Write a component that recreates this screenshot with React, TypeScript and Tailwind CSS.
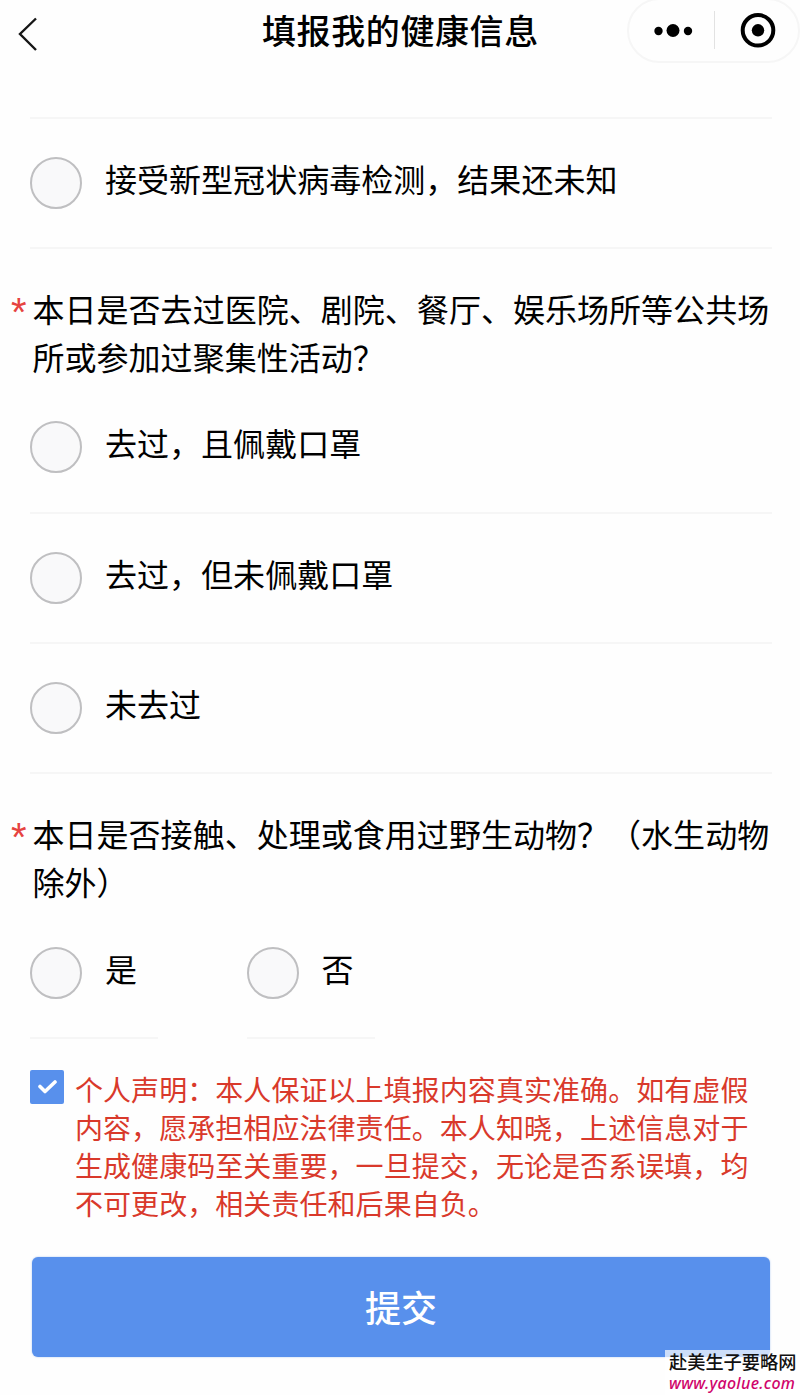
import { useState } from "react";

type RadioOptionProps = {
  label: string;
  checked: boolean;
  onSelect: () => void;
  className?: string;
};

const RadioOption = ({ label, checked, onSelect, className = "" }: RadioOptionProps) => (
  <label
    className={`flex h-[130.2px] items-center border-b-2 border-[#f6f6f6] ${className}`}
  >
    <input type="radio" className="sr-only" checked={checked} onChange={onSelect} />
    <span
      className={`-mt-px h-[52px] w-[52px] shrink-0 rounded-full border-2 border-[#bfbfc1] ${
        checked ? "bg-[#5890ec]" : "bg-[#f9f9fa]"
      }`}
    />
    <span className="-mt-[11px] ml-[23px] whitespace-nowrap">{label}</span>
  </label>
);

// question title, one entry per line
const QuestionTitle = ({ lines }: { lines: string[] }) => (
  <div className="flex pt-[35px] pb-[3.6px] leading-[48px]">
    <span className="-ml-[19px] w-[21.5px] shrink-0 pt-[4px] font-['Liberation_Sans',sans-serif] text-[40px] text-[#e64340]">
      *
    </span>
    <div>
      {lines.map((line) => (
        <p key={line} className="whitespace-nowrap">
          {line}
        </p>
      ))}
    </div>
  </div>
);

const placeOptions = ["去过，且佩戴口罩", "去过，但未佩戴口罩", "未去过"];

const statement = [
  "个人声明：本人保证以上填报内容真实准确。如有虚假",
  "内容，愿承担相应法律责任。本人知晓，上述信息对于",
  "生成健康码至关重要，一旦提交，无论是否系误填，均",
  "不可更改，相关责任和后果自负。",
];

const Header = () => (
  <header className="flex h-[117px] items-start">
    <button type="button" className="mt-[16px] ml-[16px] h-9 w-6" aria-label="返回">
      <svg width="24" height="36" viewBox="0 0 24 36" fill="none" stroke="#161616" strokeWidth="2.4">
        <path d="M20 2.5 4 18l16 16" />
      </svg>
    </button>
    <h1 className="mt-[6px] ml-[222px] w-[276px] text-[34px] leading-[48px] font-medium tracking-[0.6px] whitespace-nowrap">
      填报我的健康信息
    </h1>
    <div className="-mt-[2px] ml-[89px] flex h-[65px] w-[173px] shrink-0 items-center rounded-full border-2 border-[#f6f6f6]">
      <svg width="169" height="61" viewBox="0 0 169 61">
        <circle cx="29.5" cy="31" r="4.2" />
        <circle cx="44" cy="30.5" r="6.5" />
        <circle cx="59" cy="31" r="4.2" />
        <path d="M85.5 11v38" stroke="#e2e2e2" />
        <circle cx="129" cy="30.3" r="15.3" fill="none" stroke="#000" strokeWidth="4" />
        <circle cx="129" cy="30.3" r="6.2" />
      </svg>
    </div>
  </header>
);

const App = () => {
  const [test, setTest] = useState("");
  const [place, setPlace] = useState("");
  const [animal, setAnimal] = useState("");
  const [agreed, setAgreed] = useState(true);

  return (
    <div className="relative h-[1395px] w-[800px] overflow-hidden bg-[#fefefe] font-['Noto_Sans_CJK_SC',sans-serif] text-black">
      <Header />

      <form onSubmit={(e) => e.preventDefault()}>
        <div className="ml-[30px] w-[742px] text-[32px] tracking-[0.03px]">
          <div className="h-[2px] bg-[#f6f6f6]" />
          <RadioOption
            label="接受新型冠状病毒检测，结果还未知"
            checked={test === "unknown"}
            onSelect={() => setTest("unknown")}
          />

          <QuestionTitle
            lines={["本日是否去过医院、剧院、餐厅、娱乐场所等公共场", "所或参加过聚集性活动？"]}
          />
          {placeOptions.map((o) => (
            <RadioOption key={o} label={o} checked={place === o} onSelect={() => setPlace(o)} />
          ))}

          <QuestionTitle
            lines={["本日是否接触、处理或食用过野生动物？（水生动物", "除外）"]}
          />
          <div className="flex gap-[88.5px]">
            {["是", "否"].map((o) => (
              <RadioOption
                key={o}
                label={o}
                checked={animal === o}
                onSelect={() => setAnimal(o)}
                className="w-[128px]"
              />
            ))}
          </div>
        </div>

        {/* 个人声明 */}
        <label className="mt-[30.4px] ml-[30px] flex text-[28px] leading-[38.2px] tracking-[0.06px] text-[#d9392b]">
          <input
            type="checkbox"
            className="sr-only"
            checked={agreed}
            onChange={() => setAgreed(!agreed)}
          />
          <span className="flex h-[34px] w-[34px] shrink-0 items-center justify-center rounded-[2px] bg-[#5890ec]">
            {agreed && (
              <svg width="20" height="16" viewBox="0 0 20 16" fill="none" stroke="#fff" strokeWidth="3.6">
                <path d="m3 7.5 5 5L18 3" strokeLinecap="round" strokeLinejoin="round" />
              </svg>
            )}
          </span>
          <span className="ml-[11px]">
            {statement.map((line) => (
              <span key={line} className="block whitespace-nowrap">
                {line}
              </span>
            ))}
          </span>
        </label>

        <button
          type="submit"
          className="mt-[35px] ml-[32px] block h-[100px] w-[738px] rounded-[6px] bg-[#5890ec] pb-[3px] text-[36px] font-medium text-white shadow-[0_0_2px_#a9c4ef]"
        >
          提交
        </button>
      </form>

      <div className="absolute right-0 bottom-0 h-[45px] w-[135px] bg-white/70 pl-[4px] whitespace-nowrap">
        <p className="text-[18.2px] leading-[23px] font-medium text-[#111]">赴美生子要略网</p>
        <p className="font-['Noto_Sans',sans-serif] text-[16px] leading-[20px] font-medium tracking-[0.3px] text-[#d0056b] italic">
          www.yaolue.com
        </p>
      </div>
    </div>
  );
};

export default App;
